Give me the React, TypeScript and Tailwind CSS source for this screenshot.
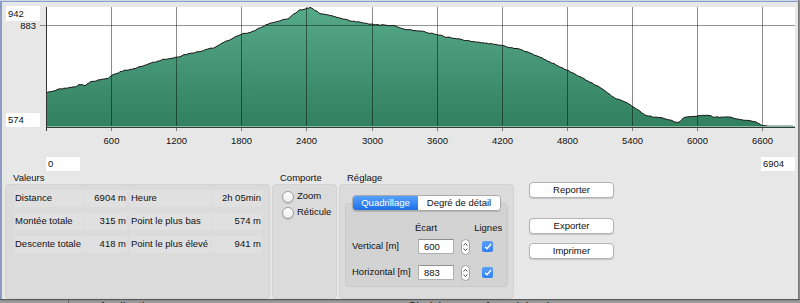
import React from 'react'

// Profil altimétrique — fenêtre "Valeurs / Comporte / Réglage"

const FONT = { fontFamily: '"Liberation Sans", Arial, sans-serif' }

// points clés du profil (coordonnées écran)
const KEY: [number, number][] = [
  [46, 93], [55, 90.5], [60, 89], [68, 88], [75, 87], [80, 84.5], [85, 86], [90, 81.7],
  [100, 80], [108, 78.3], [111, 76], [120, 71.7], [135, 68.3], [150, 63.3], [165, 59.3],
  [176, 57.3], [190, 53.3], [200, 51.7], [207, 49], [215, 47.7], [222, 43.3], [241, 34.3],
  [250, 32.3], [270, 23.3], [280, 21], [285, 19], [288, 19.3], [292, 15], [300, 10],
  [305, 9], [310, 7.4], [313, 9], [320, 13.3], [333, 15.7], [350, 20.7], [371, 24],
  [380, 25], [395, 26], [405, 29.3], [420, 31], [436, 34.3], [445, 36.7], [460, 39.3],
  [475, 41.7], [500, 45], [512, 47.7], [520, 49.3], [540, 57.3], [560, 66.7], [567, 70],
  [580, 76.7], [600, 87.3], [615, 98.3], [630, 104.3], [645, 115], [652, 116.7],
  [660, 117.3], [675, 121.7], [678, 122.7], [685, 117.3], [697, 116], [707, 115],
  [715, 117.3], [728, 116.7], [740, 119.3], [755, 121.7], [763, 125.7], [770, 126.3],
  [793, 126.2],
]

function profilePoints(): string[] {
  const pts: string[] = []
  for (let i = 0; i < KEY.length - 1; i++) {
    const [x0, y0] = KEY[i]
    const [x1, y1] = KEY[i + 1]
    for (let x = x0; x < x1; x += 2) {
      const t = (x - x0) / (x1 - x0)
      const n = Math.sin(x * 12.9898) * 43758.5453
      const j = x > 765 ? 0 : (n - Math.floor(n) - 0.5) * 1.0
      const y = Math.min(126.2, Math.max(7.2, y0 + (y1 - y0) * t + j))
      pts.push(`${x.toFixed(1)},${y.toFixed(1)}`)
    }
  }
  const last = KEY[KEY.length - 1]
  pts.push(`${last[0]},${last[1]}`)
  return pts
}

const TICKS = [600, 1200, 1800, 2400, 3000, 3600, 4200, 4800, 5400, 6000, 6600]
const tx = (v: number) => Math.round(46 + (v / 600) * 65.1) + 0.5

function Chart() {
  const pts = profilePoints()
  const line = pts.join(' ')
  return (
    <svg width="760" height="148" viewBox="40 2 760 148" className="block shrink-0">
      <defs>
        <linearGradient id="fill" x1="0" y1="0" x2="0" y2="1">
          <stop offset="0" stopColor="#56a98a" />
          <stop offset="1" stopColor="#31805f" />
        </linearGradient>
      </defs>
      <rect x="46" y="7" width="749" height="120" fill="#fff" />
      <polygon points={`${line} 793,127 46,127`} fill="url(#fill)" />
      {TICKS.map((v) => (
        <line key={v} x1={tx(v)} y1="7" x2={tx(v)} y2="131" stroke="rgba(0,0,0,0.45)" strokeWidth="1" />
      ))}
      <line x1="40" y1="25.5" x2="795" y2="25.5" stroke="rgba(0,0,0,0.42)" strokeWidth="1" />
      <polyline points={line} fill="none" stroke="#1a1a1a" strokeWidth="1" />
      <line x1="46" y1="126.5" x2="795" y2="126.5" stroke="#7dbf9f" strokeWidth="1" />
      <line x1="46" y1="127.5" x2="795" y2="127.5" stroke="#3a3a3a" strokeWidth="1" />
      <line x1="46.5" y1="7" x2="46.5" y2="131" stroke="#333" strokeWidth="1" />
      {TICKS.map((v) => (
        <text key={v} x={tx(v)} y="143.5" textAnchor="middle" fontSize="9.5" fill="#111" style={FONT}>
          {v}
        </text>
      ))}
    </svg>
  )
}

function Box({ children, className = '' }: { children: React.ReactNode; className?: string }) {
  return (
    <div className={`h-[14px] w-[34px] bg-white pl-[2px] text-[9.5px] leading-[14px] text-[#111] ${className}`}>
      {children}
    </div>
  )
}

function Cell({ children, w, right = false }: { children: React.ReactNode; w: string; right?: boolean }) {
  return (
    <div
      className={`${w} flex h-[17px] items-center whitespace-nowrap rounded-[1px] bg-[#e0e0e0] px-[1px] ${right ? 'justify-end' : ''}`}
    >
      {children}
    </div>
  )
}

const ROWS = [
  ['Distance', '6904 m', 'Heure', '2h 05min'],
  ['Montée totale', '315 m', 'Point le plus bas', '574 m'],
  ['Descente totale', '418 m', 'Point le plus élevé', '941 m'],
]

function Radio({ label }: { label: string }) {
  return (
    <div className="flex h-[13px] items-center gap-[3px]">
      <span className="h-[12px] w-[12px] rounded-full border border-[#9a9a9a] bg-gradient-to-b from-white to-[#ededed] shadow-[0_1px_1px_rgba(0,0,0,0.12)]" />
      <span>{label}</span>
    </div>
  )
}

function Stepper() {
  return (
    <span className="flex h-[16px] w-[9px] flex-col items-center justify-center gap-[2px] rounded-full border border-[#a0a0a0] bg-white">
      <svg width="5" height="3" viewBox="0 0 5 3">
        <path d="M0.5 2.5 L2.5 0.5 L4.5 2.5" fill="none" stroke="#333" strokeWidth="0.9" />
      </svg>
      <svg width="5" height="3" viewBox="0 0 5 3">
        <path d="M0.5 0.5 L2.5 2.5 L4.5 0.5" fill="none" stroke="#333" strokeWidth="0.9" />
      </svg>
    </span>
  )
}

function Check() {
  return (
    <span className="flex h-[11px] w-[11px] items-center justify-center rounded-[2px] bg-gradient-to-b from-[#5aa0fa] to-[#2f7ef0]">
      <svg width="8" height="7" viewBox="0 0 8 7">
        <path d="M1 3.8 L3 5.8 L7 1" fill="none" stroke="#fff" strokeWidth="1.4" />
      </svg>
    </span>
  )
}

function Field({ value }: { value: string }) {
  return (
    <div className="h-[15px] w-[36px] border border-[#b0b0b0] border-t-[#8f8f8f] bg-white pl-[5px] text-[9.5px] leading-[13px]">
      {value}
    </div>
  )
}

function Button({ label, className = '' }: { label: string; className?: string }) {
  return (
    <div
      className={`flex h-[16px] w-[85px] items-center justify-center rounded-[4px] border border-[#b3b3b3] bg-white shadow-[0_1px_1px_rgba(0,0,0,0.15)] ${className}`}
    >
      {label}
    </div>
  )
}

export default function App() {
  return (
    <div className="h-[303px] w-[800px] overflow-hidden bg-[#9d9d9d] text-[9.5px] text-[#111]" style={FONT}>
      <div className="flex h-[299px] w-[798px] flex-col bg-[#e7e7e7] shadow-[inset_2px_0_0_#8e9cc4,1px_1px_2px_rgba(0,0,0,0.35)]">
        <div className="h-[1px] bg-[#d6d6d6]" />
        <div className="h-[1px] bg-[#7f9fe0]" />

        {/* graphique */}
        <div className="flex h-[148px]">
          <div className="flex w-[40px] flex-col pl-[6px]">
            <Box className="mt-[4px] h-[15px] leading-[15px]">942</Box>
            <div className="h-[10px] pr-[4px] text-right leading-[10px]">883</div>
            <Box className="mt-[82px]">574</Box>
          </div>
          <Chart />
        </div>

        <div className="mt-[7px] flex justify-between pl-[46px] pr-[3px]">
          <Box>0</Box>
          <Box>6904</Box>
        </div>

        {/* panneau du bas */}
        <div className="mt-[1px] flex flex-1">
          <div className="ml-[5px] flex w-[265px] flex-col">
            <div className="h-[12px] pl-[8px] leading-[12px]">Valeurs</div>
            <div className="flex-1 rounded-[4px] border border-[#d2d2d2] bg-[#dbdbdb] pl-[8px] pt-[2px]">
              {ROWS.map((r) => (
                <div key={r[0]} className="flex h-[23px] items-center">
                  <Cell w="w-[69px]">{r[0]}</Cell>
                  <div className="w-[1px]" />
                  <Cell w="w-[43px]" right>{r[1]}</Cell>
                  <div className="w-[3px]" />
                  <Cell w="w-[81px]">{r[2]}</Cell>
                  <div className="w-[1px]" />
                  <Cell w="w-[50px]" right>{r[3]}</Cell>
                </div>
              ))}
            </div>
          </div>

          <div className="ml-[2px] flex w-[65px] flex-col">
            <div className="h-[12px] pl-[8px] leading-[12px]">Comporte</div>
            <div className="flex flex-1 flex-col gap-[3px] rounded-[4px] border border-[#d2d2d2] bg-[#dbdbdb] pl-[9px] pt-[5px]">
              <Radio label="Zoom" />
              <Radio label="Réticule" />
            </div>
          </div>

          <div className="ml-[2px] flex w-[175px] flex-col">
            <div className="h-[12px] pl-[8px] leading-[12px]">Réglage</div>
            <div className="flex-1 rounded-[4px] border border-[#d2d2d2] bg-[#dbdbdb] pt-[10px]">
              <div className="relative z-10 ml-[12px] flex h-[16px] w-[149px] overflow-hidden rounded-[4px] border border-[#a9a9a9] shadow-[0_1px_1px_rgba(0,0,0,0.15)]">
                <div className="flex w-[65px] items-center justify-center bg-gradient-to-b from-[#56a0fb] to-[#1e6fe6] text-white">
                  Quadrillage
                </div>
                <div className="flex flex-1 items-center justify-center bg-white">Degré de détail</div>
              </div>
              <div className="mx-[5px] -mt-[8px] h-[84px] rounded-[4px] border border-[#c9c9c9] bg-[#d3d3d3] pl-[6px] pt-[18px]">
                <div className="flex h-[12px] items-center">
                  <span className="ml-[63px]">Écart</span>
                  <span className="ml-[37px]">Lignes</span>
                </div>
                <div className="mt-[5px] flex h-[15px] items-center">
                  <span className="w-[66px]">Vertical [m]</span>
                  <Field value="600" />
                  <span className="ml-[7px]"><Stepper /></span>
                  <span className="ml-[12px]"><Check /></span>
                </div>
                <div className="mt-[11px] flex h-[15px] items-center">
                  <span className="w-[66px] whitespace-nowrap">Horizontal [m]</span>
                  <Field value="883" />
                  <span className="ml-[7px]"><Stepper /></span>
                  <span className="ml-[12px]"><Check /></span>
                </div>
              </div>
            </div>
          </div>

          <div className="ml-[15px] flex flex-col pt-[10px]">
            <Button label="Reporter" />
            <Button label="Exporter" className="mt-[20px]" />
            <Button label="Imprimer" className="mt-[9px]" />
          </div>
        </div>
      </div>

      {/* fenêtre derrière, à peine visible */}
      <div className="flex h-[4px] overflow-hidden border-t border-[#5a5a5a] text-[12px] leading-[12px] text-[#222]">
        <span className="ml-[68px] h-[4px] w-[1px] bg-[#666]" />
        <span className="ml-[16px] pt-[1px]">‹ › Application</span>
        <span className="ml-[250px] pt-[1px]">Choisissez un formulaire dans</span>
      </div>
    </div>
  )
}
